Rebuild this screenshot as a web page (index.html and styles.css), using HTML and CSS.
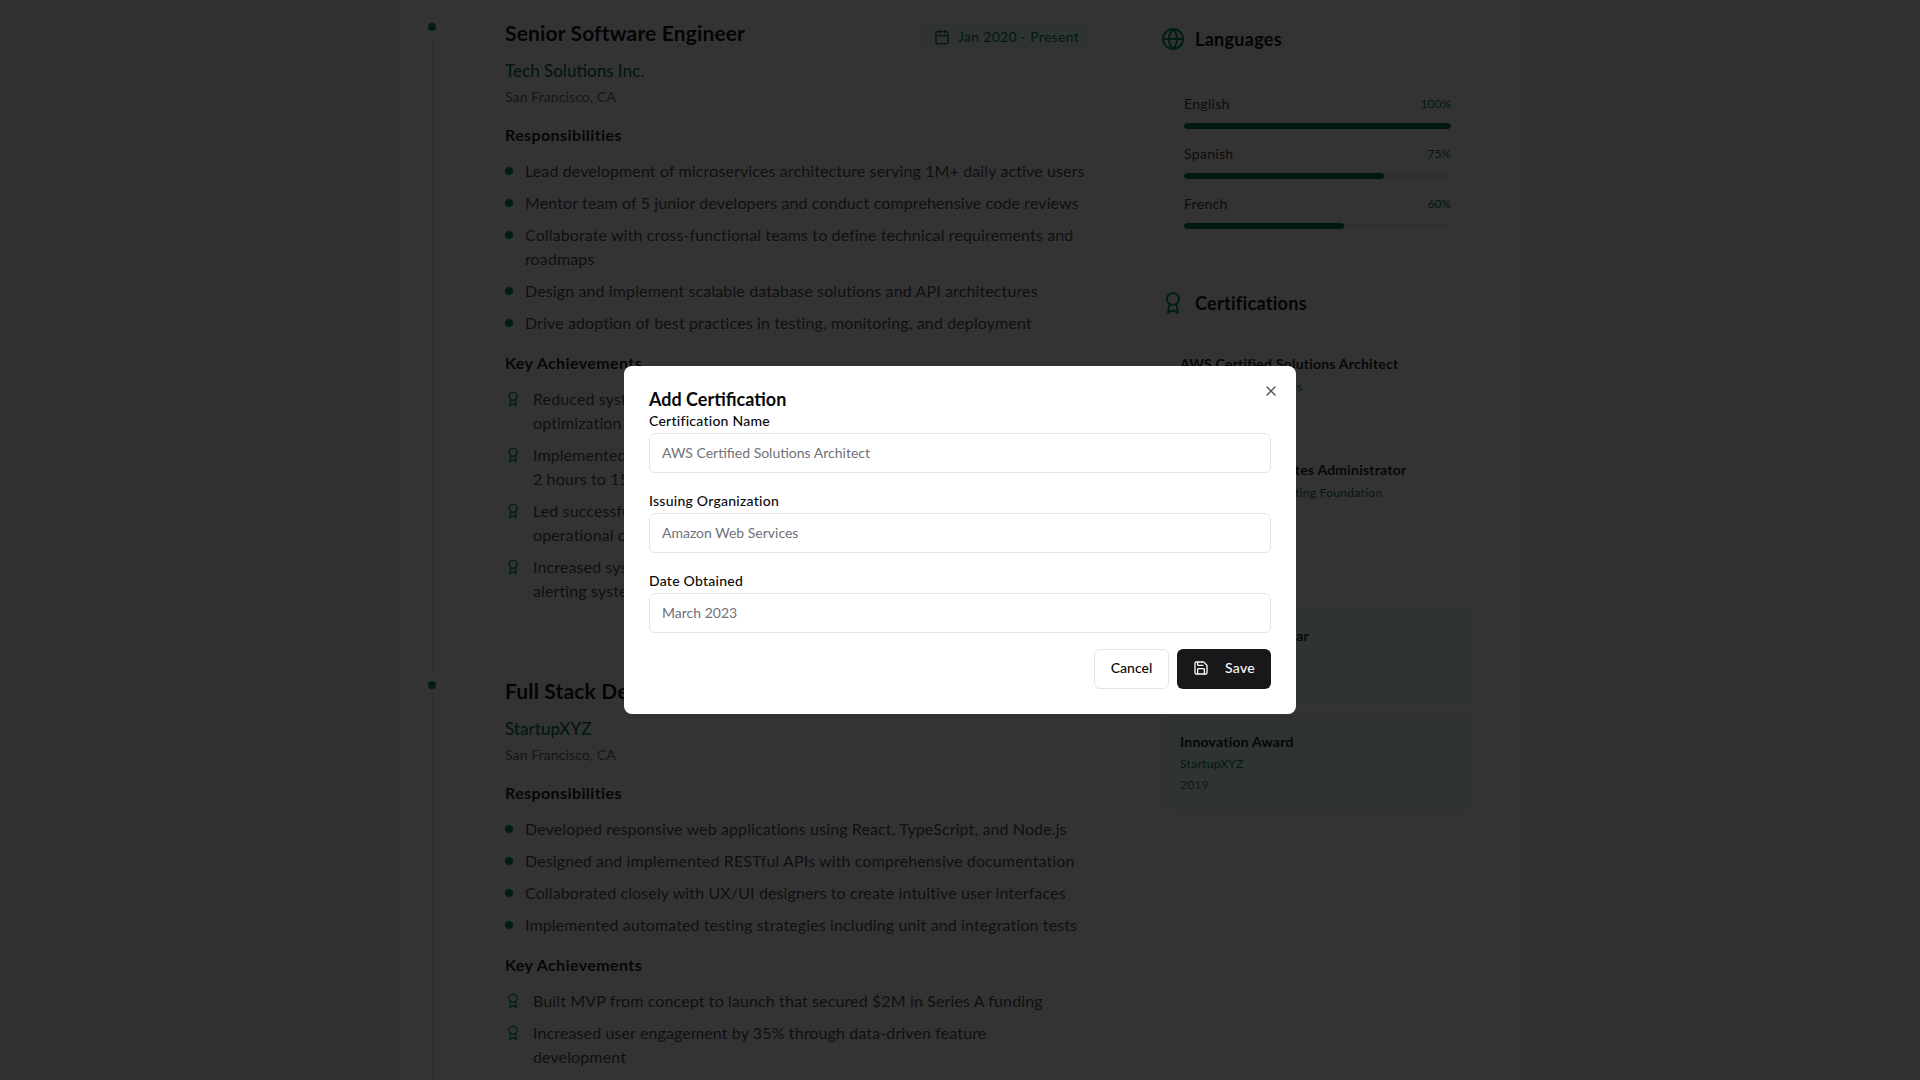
FILE: index.html
```html
<!DOCTYPE html>
<html lang="en">
<head>
<meta charset="utf-8">
<title>Resume</title>
<link rel="stylesheet" href="styles.css">
</head>
<body>
<svg class="sprite" width="0" height="0" aria-hidden="true">
  <defs>
    <symbol id="award" viewBox="0 0 24 24"><circle cx="12" cy="8" r="6"/><path d="M15.477 12.89 17 22l-5-3-5 3 1.523-9.11"/></symbol>
    <symbol id="globe" viewBox="0 0 24 24"><circle cx="12" cy="12" r="10"/><path d="M12 2a14.5 14.5 0 0 0 0 20 14.5 14.5 0 0 0 0-20"/><path d="M2 12h20"/></symbol>
    <symbol id="calendar" viewBox="0 0 24 24"><path d="M8 2v4"/><path d="M16 2v4"/><rect x="3" y="4" width="18" height="18" rx="2"/><path d="M3 10h18"/></symbol>
    <symbol id="save" viewBox="0 0 24 24"><path d="M15.2 3a2 2 0 0 1 1.4.6l3.8 3.8a2 2 0 0 1 .6 1.4V19a2 2 0 0 1-2 2H5a2 2 0 0 1-2-2V5a2 2 0 0 1 2-2z"/><path d="M17 21v-7a1 1 0 0 0-1-1H8a1 1 0 0 0-1 1v7"/><path d="M7 3v4a1 1 0 0 0 1 1h7"/></symbol>
    <symbol id="close" viewBox="0 0 24 24"><path d="M18 6 6 18"/><path d="m6 6 12 12"/></symbol>
  </defs>
</svg>

<div class="sheet">
  <main class="experience">
    <article class="job">
      <div class="rail"><span class="rail-dot"></span><span class="rail-line"></span></div>
      <div class="job-body">
        <header class="job-head">
          <h3 class="job-title">Senior Software Engineer</h3>
          <span class="date-badge"><svg class="icon icon-date"><use href="#calendar"/></svg>Jan 2020 - Present</span>
        </header>
        <p class="company">Tech Solutions Inc.</p>
        <p class="location">San Francisco, CA</p>
        <h4 class="sub-head">Responsibilities</h4>
        <ul class="bullets">
          <li>Lead development of microservices architecture serving 1M+ daily active users</li>
          <li>Mentor team of 5 junior developers and conduct comprehensive code reviews</li>
          <li>Collaborate with cross-functional teams to define technical requirements and roadmaps</li>
          <li>Design and implement scalable database solutions and API architectures</li>
          <li>Drive adoption of best practices in testing, monitoring, and deployment</li>
        </ul>
        <h4 class="sub-head">Key Achievements</h4>
        <ul class="wins">
          <li><svg class="icon icon-win"><use href="#award"/></svg><span>Reduced system response time by 40% through database query<br>optimization and caching</span></li>
          <li><svg class="icon icon-win"><use href="#award"/></svg><span>Implemented CI/CD pipeline reducing deployment time from<br>2 hours to 15 minutes</span></li>
          <li><svg class="icon icon-win"><use href="#award"/></svg><span>Led successful migration to cloud infrastructure, saving 30% in<br>operational costs</span></li>
          <li><svg class="icon icon-win"><use href="#award"/></svg><span>Increased system reliability to 99.9% uptime through better<br>alerting systems</span></li>
        </ul>
      </div>
    </article>

    <article class="job">
      <div class="rail"><span class="rail-dot"></span><span class="rail-line"></span></div>
      <div class="job-body">
        <header class="job-head">
          <h3 class="job-title">Full Stack Developer</h3>
          <span class="date-badge"><svg class="icon icon-date"><use href="#calendar"/></svg>Jun 2018 - Dec 2019</span>
        </header>
        <p class="company">StartupXYZ</p>
        <p class="location">San Francisco, CA</p>
        <h4 class="sub-head">Responsibilities</h4>
        <ul class="bullets">
          <li>Developed responsive web applications using React, TypeScript, and Node.js</li>
          <li>Designed and implemented RESTful APIs with comprehensive documentation</li>
          <li>Collaborated closely with UX/UI designers to create intuitive user interfaces</li>
          <li>Implemented automated testing strategies including unit and integration tests</li>
        </ul>
        <h4 class="sub-head">Key Achievements</h4>
        <ul class="wins">
          <li><svg class="icon icon-win"><use href="#award"/></svg><span>Built MVP from concept to launch that secured $2M in Series A funding</span></li>
          <li><svg class="icon icon-win"><use href="#award"/></svg><span>Increased user engagement by 35% through data-driven feature<br>development</span></li>
          <li><svg class="icon icon-win"><use href="#award"/></svg><span>Optimized application performance resulting in 50% faster lead times</span></li>
        </ul>
      </div>
    </article>
  </main>

  <aside class="side">
    <section class="side-section languages">
      <h2 class="side-head"><svg class="icon icon-head"><use href="#globe"/></svg>Languages</h2>
      <div class="lang-list">
        <div class="lang">
          <div class="lang-row"><span class="lang-name">English</span><span class="lang-pct">100%</span></div>
          <div class="track"><div class="fill" style="width:100%"></div></div>
        </div>
        <div class="lang">
          <div class="lang-row"><span class="lang-name">Spanish</span><span class="lang-pct">75%</span></div>
          <div class="track"><div class="fill" style="width:75%"></div></div>
        </div>
        <div class="lang">
          <div class="lang-row"><span class="lang-name">French</span><span class="lang-pct">60%</span></div>
          <div class="track"><div class="fill" style="width:60%"></div></div>
        </div>
      </div>
    </section>

    <section class="side-section certs">
      <h2 class="side-head"><svg class="icon icon-head"><use href="#award"/></svg>Certifications</h2>
      <div class="cert-list">
        <div class="cert">
          <p class="item-name">AWS Certified Solutions Architect</p>
          <p class="item-org">Amazon Web Services</p>
          <p class="item-date">March 2023</p>
        </div>
        <div class="cert">
          <p class="item-name">Certified Kubernetes Administrator</p>
          <p class="item-org">Cloud Native Computing Foundation</p>
          <p class="item-date">January 2022</p>
        </div>
      </div>
    </section>

    <section class="side-section awards">
      <h2 class="side-head"><svg class="icon icon-head"><use href="#award"/></svg>Awards</h2>
      <div class="award-list">
        <div class="award">
          <p class="item-name">Engineer of the Year</p>
          <p class="item-org">Tech Solutions Inc.</p>
          <p class="item-date">2022</p>
        </div>
        <div class="award">
          <p class="item-name">Innovation Award</p>
          <p class="item-org">StartupXYZ</p>
          <p class="item-date">2019</p>
        </div>
      </div>
    </section>
  </aside>
</div>

<div class="overlay">
  <div class="modal" role="dialog" aria-modal="true">
    <button class="modal-close" type="button" aria-label="Close"><svg class="icon icon-close"><use href="#close"/></svg></button>
    <h2 class="modal-title">Add Certification</h2>
    <form class="modal-form">
      <div class="field">
        <label class="field-label" for="c-name">Certification Name</label>
        <input class="field-input" id="c-name" type="text" placeholder="AWS Certified Solutions Architect">
      </div>
      <div class="field">
        <label class="field-label" for="c-org">Issuing Organization</label>
        <input class="field-input" id="c-org" type="text" placeholder="Amazon Web Services">
      </div>
      <div class="field">
        <label class="field-label" for="c-date">Date Obtained</label>
        <input class="field-input" id="c-date" type="text" placeholder="March 2023">
      </div>
      <div class="modal-actions">
        <button class="btn btn-outline" type="button">Cancel</button>
        <button class="btn btn-solid" type="button"><svg class="icon icon-save"><use href="#save"/></svg>Save</button>
      </div>
    </form>
  </div>
</div>
</body>
</html>
```

FILE: styles.css
```css
* { box-sizing: border-box; }

html, body {
  height: 100%;
  overflow: hidden;
}

body {
  margin: 0;
  background: #f4f4f5;
  color: #1a1a1a;
  font-family: "Lato", "Noto Sans", sans-serif;
  font-size: 16px;
  line-height: 24px;
}

p, h2, h3, h4, ul { margin: 0; padding: 0; }
ul { list-style: none; }

.sprite { position: absolute; }

.icon {
  display: block;
  flex: none;
  fill: none;
  stroke: currentColor;
  stroke-width: 2;
  stroke-linecap: round;
  stroke-linejoin: round;
}

/* Page behind the dialog */
.sheet {
  width: 1124px;
  height: 1080px;
  margin: 0 auto;
  padding: 20px 0 0 30px;
  background: #fff;
  display: flex;
  overflow: hidden;
}

.experience {
  width: 668px;
  flex: none;
  display: flex;
  flex-direction: column;
  gap: 7px;
}

.job {
  display: flex;
  gap: 69px;
}

.rail {
  width: 8px;
  flex: none;
  padding-top: 3px;
  display: flex;
  flex-direction: column;
  align-items: center;
}

.rail-dot {
  width: 8px;
  height: 8px;
  border-radius: 50%;
  background: #059669;
}

.rail-line {
  width: 1px;
  flex: 1;
  margin-top: 4px;
  background: #e4e4e7;
}

.job-body {
  width: 585px;
  flex: none;
  padding-bottom: 68px;
}

.job-head {
  display: flex;
  justify-content: space-between;
  align-items: flex-start;
}

.job-title {
  font-size: 21px;
  line-height: 26px;
  font-weight: 700;
  letter-spacing: 0.15px;
  color: #18181b;
}

.date-badge {
  display: flex;
  align-items: center;
  gap: 8px;
  margin: 2px 0 0;
  padding: 5px 11px 3px 12px;
  border-radius: 6px;
  background: #ecfdf5;
  font-size: 14px;
  line-height: 20px;
  letter-spacing: 0.3px;
  color: #047857;
}

.icon-date { width: 16px; height: 16px; }

.company {
  margin-top: 7px;
  font-size: 17px;
  line-height: 28px;
  font-weight: 500;
  color: #047857;
}

.location {
  margin-top: 2px;
  font-size: 14px;
  line-height: 20px;
  letter-spacing: 0.1px;
  color: #71717a;
}

.sub-head {
  margin-top: 16px;
  font-size: 16px;
  line-height: 24px;
  font-weight: 700;
  letter-spacing: 0.4px;
  color: #27272a;
}

.bullets, .wins {
  margin-top: 12px;
  display: flex;
  flex-direction: column;
  gap: 8px;
  letter-spacing: 0.12px;
  color: #52525b;
}

.bullets li {
  display: flex;
  gap: 12px;
}

.bullets li::before {
  content: "";
  width: 8px;
  height: 8px;
  flex: none;
  margin-top: 8px;
  border-radius: 50%;
  background: #059669;
}

.wins li {
  display: flex;
  gap: 12px;
}

.icon-win {
  width: 16px;
  height: 16px;
  margin-top: 4px;
  color: #059669;
}

/* Right column */
.side {
  width: 309px;
  flex: none;
  margin-left: 67px;
  display: flex;
  flex-direction: column;
}

.side-head {
  display: flex;
  align-items: center;
  gap: 10px;
  font-size: 18px;
  line-height: 28px;
  font-weight: 700;
  letter-spacing: 0.3px;
  color: #18181b;
}

.icon-head {
  width: 24px;
  height: 24px;
  margin-left: -2px;
  color: #059669;
}

.languages { padding-top: 5px; }

.lang-list {
  margin-top: 41px;
  padding: 0 21px;
  display: flex;
  flex-direction: column;
  gap: 15px;
}

.lang-row {
  display: flex;
  justify-content: space-between;
  align-items: center;
  height: 20px;
}

.lang-name { font-size: 14px; letter-spacing: 0.3px; color: #3f3f46; }
.lang-pct { font-size: 12px; color: #047857; }

.track {
  height: 6px;
  margin-top: 9px;
  border-radius: 3px;
  background: #f4f4f5;
  overflow: hidden;
}

.fill {
  height: 100%;
  border-radius: 3px;
  background: #047857;
}

.certs { margin-top: 60px; }

.cert-list {
  margin-top: 37px;
  display: flex;
  flex-direction: column;
  gap: 42px;
}

.cert { padding-left: 17px; }
.cert .item-org { margin-top: 3px; }

.item-name {
  font-size: 14px;
  line-height: 20px;
  font-weight: 700;
  letter-spacing: 0.22px;
  color: #27272a;
}

.item-org {
  margin-top: 2px;
  font-size: 12px;
  line-height: 20px;
  letter-spacing: 0.3px;
  color: #047857;
}

.item-date {
  margin-top: 1px;
  font-size: 12px;
  line-height: 20px;
  letter-spacing: 0.3px;
  color: #71717a;
}

.awards { margin-top: 38px; }

.award-list {
  margin-top: 20px;
  display: flex;
  flex-direction: column;
  gap: 13px;
}

.award {
  height: 93px;
  padding: 15px 16px;
  border: 1px solid #dcf5ea;
  border-radius: 8px;
  background: #ecfdf5;
}

/* Dialog */
.overlay {
  position: fixed;
  inset: 0;
  background: rgba(0, 0, 0, 0.8);
  display: flex;
  align-items: center;
  justify-content: center;
}

.modal {
  position: relative;
  width: 672px;
  height: 348px;
  padding: 25px;
  border-radius: 8px;
  background: #fff;
}

.modal-close {
  position: absolute;
  top: 17px;
  right: 17px;
  padding: 0;
  border: 0;
  background: none;
  color: #52525b;
}

.icon-close { width: 16px; height: 16px; }

.modal-title {
  font-size: 18px;
  line-height: 16px;
  font-weight: 700;
  color: #09090b;
}

.modal-form { margin-top: 4px; }

.field { margin-bottom: 18px; }

.field-label {
  display: block;
  font-size: 14px;
  line-height: 20px;
  font-weight: 500;
  letter-spacing: 0.25px;
  color: #09090b;
}

.field-input {
  display: block;
  width: 100%;
  height: 40px;
  margin-top: 2px;
  padding: 0 12px 2px;
  border: 1px solid #e4e4e7;
  border-radius: 6px;
  background: #fff;
  font: inherit;
  font-size: 14px;
  color: #09090b;
}

.field-input::placeholder { color: #71717a; opacity: 1; }

.modal-actions {
  display: flex;
  justify-content: flex-end;
  gap: 8px;
  margin-top: -2px;
}

.btn {
  height: 40px;
  padding: 0 0 2px;
  border-radius: 6px;
  font: inherit;
  font-size: 14px;
  line-height: 20px;
  font-weight: 500;
  display: flex;
  align-items: center;
  justify-content: center;
}

.btn-outline {
  width: 75px;
  border: 1px solid #e4e4e7;
  background: #fff;
  color: #09090b;
}

.btn-solid {
  width: 94px;
  gap: 16px;
  border: 0;
  letter-spacing: 0.3px;
  background: #18181b;
  color: #fafafa;
}

.icon-save { width: 16px; height: 16px; }
```
